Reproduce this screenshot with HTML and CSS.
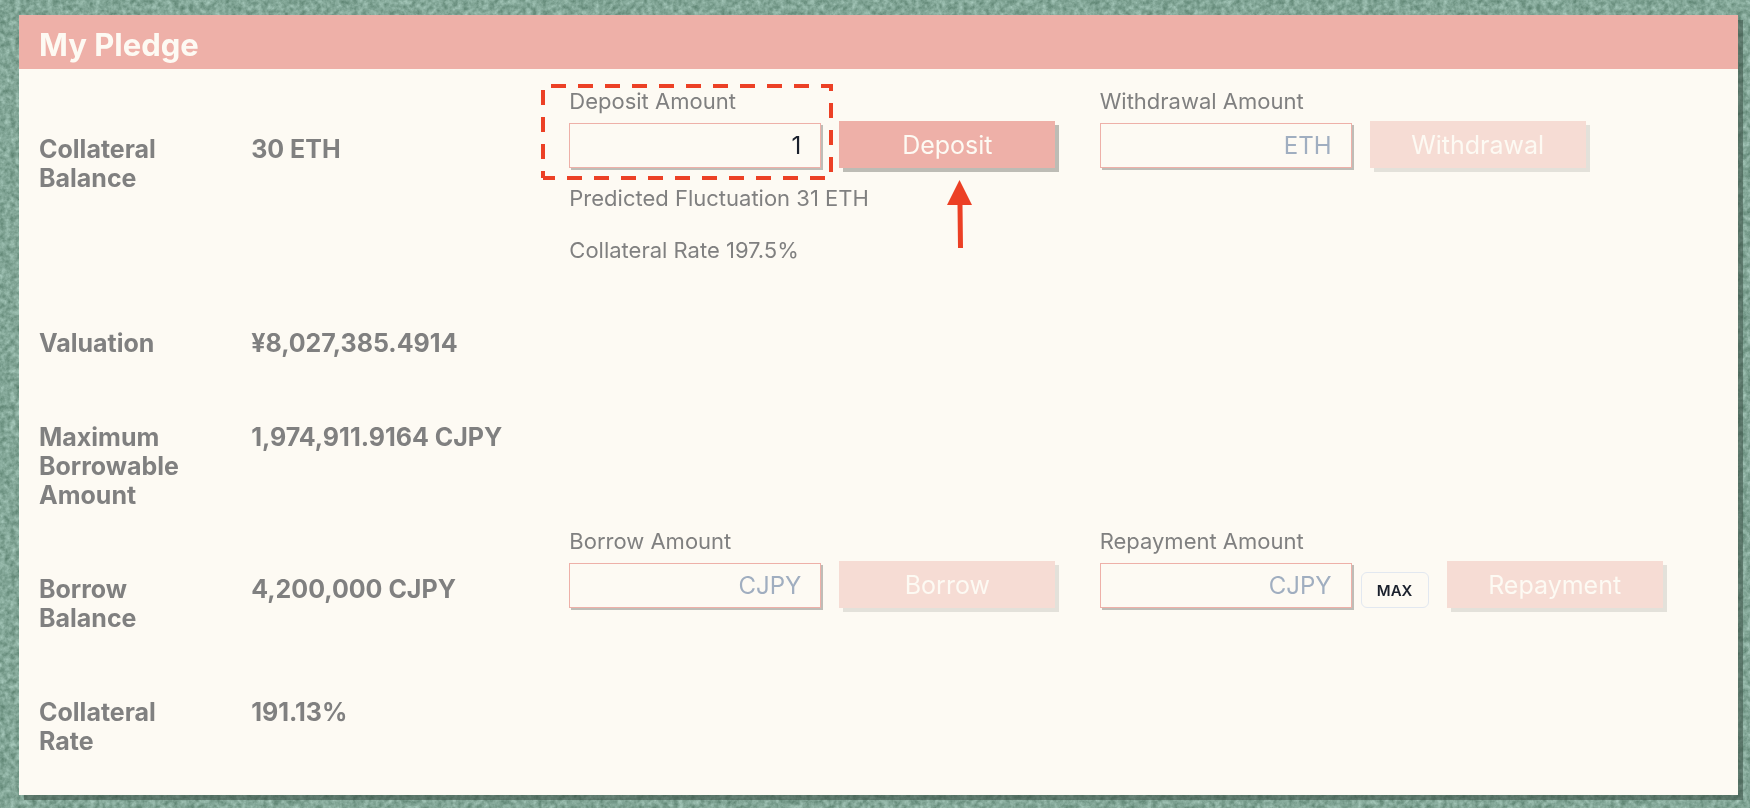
FILE: index.html
```html
<!DOCTYPE html>
<html lang="en">
<head>
<meta charset="utf-8">
<title>My Pledge</title>
<link rel="stylesheet" href="styles.css">
</head>
<body>
<svg class="felt" aria-hidden="true">
  <filter id="felt" x="0" y="0" width="100%" height="100%" color-interpolation-filters="sRGB">
    <feTurbulence type="fractalNoise" baseFrequency="0.19" numOctaves="3" seed="4"/>
    <feColorMatrix values="0.38 0 0 0 0.32  0.36 0 0 0 0.47  0.38 0 0 0 0.4  0 0 0 0 1"/>
  </filter>
  <rect width="100%" height="100%" filter="url(#felt)"/>
</svg>
<main class="card">
  <header class="card-header"><h1 class="title">My Pledge</h1></header>
  <div class="rows">
    <section class="row">
      <h2 class="name">Collateral Balance</h2>
      <p class="value">30 ETH</p>
      <form class="form">
        <label class="label" for="deposit">Deposit Amount</label>
        <div class="controls">
          <input class="input" id="deposit" type="text" inputmode="decimal" placeholder="ETH" value="1">
          <button class="button" type="button">Deposit</button>
        </div>
        <p class="hint">Predicted Fluctuation 31 ETH</p>
        <p class="hint">Collateral Rate 197.5%</p>
        <svg class="outline" width="292" height="96" viewBox="0 0 292 96" aria-hidden="true">
          <path d="M2 2H290V94H2" stroke-dashoffset="19"/>
          <path d="M2 94V2" stroke-dashoffset="8"/>
        </svg>
        <svg class="arrow" width="26" height="68" viewBox="0 0 26 68" aria-hidden="true">
          <path d="M12.500 0L25 25H15.500L16 68H11L10.500 25H0Z"/>
        </svg>
      </form>
      <form class="form">
        <label class="label" for="withdrawal">Withdrawal Amount</label>
        <div class="controls">
          <input class="input" id="withdrawal" type="text" inputmode="decimal" placeholder="ETH">
          <button class="button" type="button" disabled>Withdrawal</button>
        </div>
      </form>
    </section>
    <section class="row">
      <h2 class="name">Valuation</h2>
      <p class="value">¥8,027,385.4914</p>
    </section>
    <section class="row">
      <h2 class="name">Maximum Borrowable Amount</h2>
      <p class="value">1,974,911.9164 CJPY</p>
    </section>
    <section class="row">
      <h2 class="name">Borrow Balance</h2>
      <p class="value">4,200,000 CJPY</p>
      <form class="form">
        <label class="label" for="borrow">Borrow Amount</label>
        <div class="controls">
          <input class="input" id="borrow" type="text" inputmode="decimal" placeholder="CJPY">
          <button class="button" type="button" disabled>Borrow</button>
        </div>
      </form>
      <form class="form">
        <label class="label" for="repayment">Repayment Amount</label>
        <div class="controls">
          <div class="with-max">
            <input class="input" id="repayment" type="text" inputmode="decimal" placeholder="CJPY">
            <button class="max" type="button">MAX</button>
          </div>
          <button class="button" type="button" disabled>Repayment</button>
        </div>
      </form>
    </section>
    <section class="row">
      <h2 class="name">Collateral Rate</h2>
      <p class="value">191.13%</p>
    </section>
  </div>
</main>
</body>
</html>
```
FILE: styles.css
```css
* { box-sizing: border-box; margin: 0; }

body {
  padding: 15px 12px 13px 19px;
  background: #7fa496;
  color: #808080;
  font-family: Inter, "Liberation Sans", sans-serif;
}

.felt {
  position: fixed;
  inset: 0;
  z-index: -1;
  width: 100%;
  height: 100%;
}

.card {
  background: #fdfaf3;
  box-shadow: 5px 5px 0 rgba(50, 70, 60, 0.5);
}

.card-header {
  padding: 10px 20px 5px;
  background: #eeb0a8;
}

.title {
  color: #fdfaf3;
  font-size: 31px;
  font-weight: 700;
  line-height: 39px;
}

.rows {
  display: flex;
  flex-direction: column;
  gap: 17px;
  padding: 18px 2px 39px 20px;
}

.row {
  display: grid;
  grid-template-columns: 2fr 3fr 5fr 6fr;
  align-items: start;
}

.name,
.value {
  padding-top: 48px;
  font-size: 25px;
  font-weight: 700;
  line-height: 29px;
}

.name { padding-right: 48px; }

.form {
  position: relative;
  display: flex;
  flex-direction: column;
}

.label,
.hint {
  font-size: 22px;
  font-weight: 400;
  line-height: 28px;
}

.label { margin-bottom: 6px; }
.hint { margin-top: 16px; }
.hint + .hint { margin-top: 24px; }

.controls {
  display: flex;
  align-items: flex-end;
  gap: 18px;
}

.with-max {
  display: flex;
  align-items: flex-end;
  gap: 9px;
}

.input {
  width: 252px;
  height: 45px;
  padding: 0 19px;
  border: 1px solid #eeb0a8;
  border-radius: 0;
  outline: 0;
  background: #fdfaf3;
  box-shadow: 2px 2px 0 #bfbdb7;
  color: #1a202c;
  font: 400 24px Inter, "Liberation Sans", sans-serif;
  text-align: right;
}

.input::placeholder {
  color: #a0aec0;
  opacity: 1;
}

.button {
  width: 216px;
  height: 47px;
  padding: 0;
  border: 0;
  background: #eeb0a8;
  box-shadow: 4px 4px 0 #bdbcb5;
  color: #fdfaf3;
  font: 400 25px Inter, "Liberation Sans", sans-serif;
}

.button:disabled { opacity: 0.4; }

.max {
  width: 68px;
  height: 36px;
  padding: 0;
  border: 1px solid #e2e8f0;
  border-radius: 6px;
  background: transparent;
  color: #1a202c;
  font: 600 15px Inter, "Liberation Sans", sans-serif;
}

.outline {
  position: absolute;
  top: -3px;
  left: -28px;
  fill: none;
  stroke: #ec4025;
  stroke-width: 4;
  stroke-dasharray: 15 12;
  pointer-events: none;
}

.arrow {
  position: absolute;
  top: 93px;
  left: 378px;
  fill: #ec4025;
  pointer-events: none;
}
```
